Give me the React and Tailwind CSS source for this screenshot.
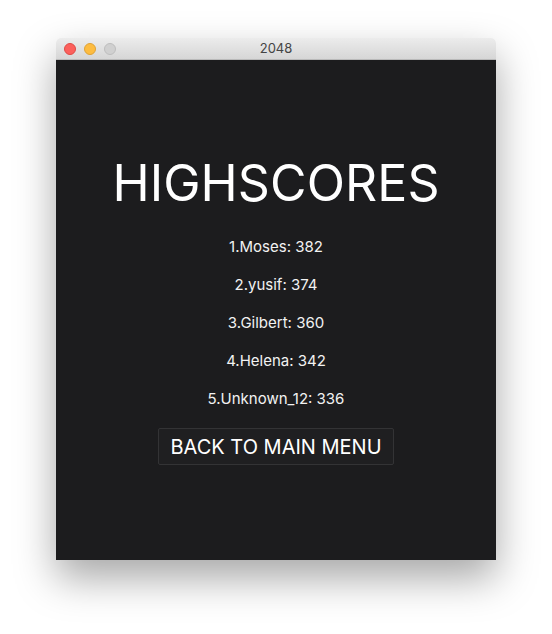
const SCORES = [
  { name: "Moses", score: 382 },
  { name: "yusif", score: 374 },
  { name: "Gilbert", score: 360 },
  { name: "Helena", score: 342 },
  { name: "Unknown_12", score: 336 },
];

export default function App() {
  return (
    <div className="min-h-[634px] bg-white pt-[38px] pl-[56px]" style={{ fontFamily: "Inter, 'Noto Sans', sans-serif" }}>
      <div className="w-[440px] rounded-t-[5px] overflow-hidden shadow-[0_18px_40px_rgba(0,0,0,0.35)]">
        {/* Title bar */}
        <div className="relative h-[22px] bg-gradient-to-b from-[#ececec] to-[#d6d6d6] border-b border-[#b9b9b9] flex items-center justify-center">
          <div className="absolute left-[8px] top-[5px] flex gap-[8px]">
            <span className="w-[12px] h-[12px] rounded-full bg-[#fc605c] border border-[#de4a45]" />
            <span className="w-[12px] h-[12px] rounded-full bg-[#fdbc40] border border-[#dea236]" />
            <span className="w-[12px] h-[12px] rounded-full bg-[#d0d0d0] border border-[#bdbdbd]" />
          </div>
          <span className="text-[13px] text-[#444444]">2048</span>
        </div>

        {/* Content */}
        <div className="h-[500px] bg-[#1c1c1e] flex flex-col items-center pt-[98px] text-white">
          <h1 className="text-[50px] leading-none font-normal tracking-[0.1px]">HIGHSCORES</h1>
          <div className="mt-[30px] flex flex-col items-center gap-[20px]">
            {SCORES.map((s, i) => (
              <div key={s.name} className="text-[15px] leading-[18px] text-[#f2f2f2]">
                {i + 1}.{s.name}: {s.score}
              </div>
            ))}
          </div>
          <button className="mt-[20px] h-[37px] px-[11px] border border-[#333335] bg-[#1f1f21] text-[20px] text-white leading-none rounded-[2px]">
            BACK TO MAIN MENU
          </button>
        </div>
      </div>
    </div>
  );
}
